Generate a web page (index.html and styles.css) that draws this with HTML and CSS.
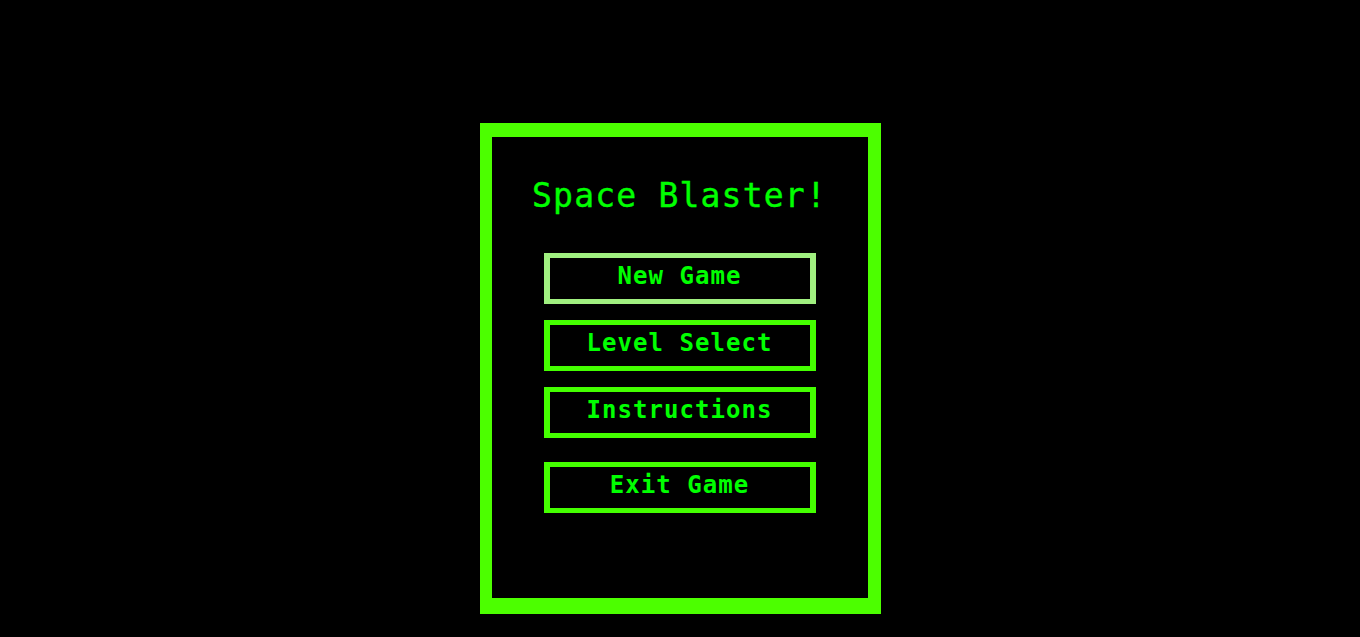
FILE: index.html
```html
<!DOCTYPE html>
<html lang="en">
<head>
<meta charset="utf-8">
<title>Space Blaster!</title>
<link rel="stylesheet" href="styles.css">
</head>
<body>
  <main class="screen">
    <section class="menu">
      <h1 class="title">Space Blaster!</h1>
      <nav class="options">
        <button class="option option-active" type="button">New Game</button>
        <button class="option" type="button">Level Select</button>
        <button class="option" type="button">Instructions</button>
        <button class="option option-exit" type="button">Exit Game</button>
      </nav>
    </section>
  </main>
</body>
</html>
```

FILE: styles.css
```css
html, body {
  margin: 0;
  padding: 0;
  background: #000;
}

body {
  font-family: "DejaVu Sans Mono", "Liberation Mono", monospace;
  color: #00ff00;
}

.screen {
  display: flex;
  justify-content: center;
  padding-top: 123px;
}

.menu {
  box-sizing: border-box;
  width: 401px;
  height: 491px;
  border-style: solid;
  border-color: #4cff00;
  border-width: 14px 13px 16px 12px;
  background: #000;
  display: flex;
  flex-direction: column;
  align-items: center;
  padding-top: 39px;
}

.title {
  margin: 0 0 37px 0;
  font-size: 33px;
  font-weight: normal;
  line-height: 40px;
  letter-spacing: 1.2px;
  color: #00ff00;
  white-space: nowrap;
  -webkit-text-stroke: 0.4px #00ff00;
}

.options {
  display: flex;
  flex-direction: column;
  gap: 16px;
}

.option {
  box-sizing: border-box;
  width: 272px;
  height: 51px;
  margin: 0;
  padding: 0 0 4px 0;
  border-style: solid;
  border-width: 5px 6px;
  border-color: #44ff00;
  border-radius: 0;
  background: #000;
  color: #00ff00;
  font-family: "DejaVu Sans Mono", "Liberation Mono", monospace;
  font-size: 24px;
  font-weight: bold;
  line-height: 37px;
  letter-spacing: 1.05px;
  text-align: center;
  cursor: pointer;
}

.option-active {
  border-color: #a0f080;
}

.option-exit {
  margin-top: 8px;
}
```
